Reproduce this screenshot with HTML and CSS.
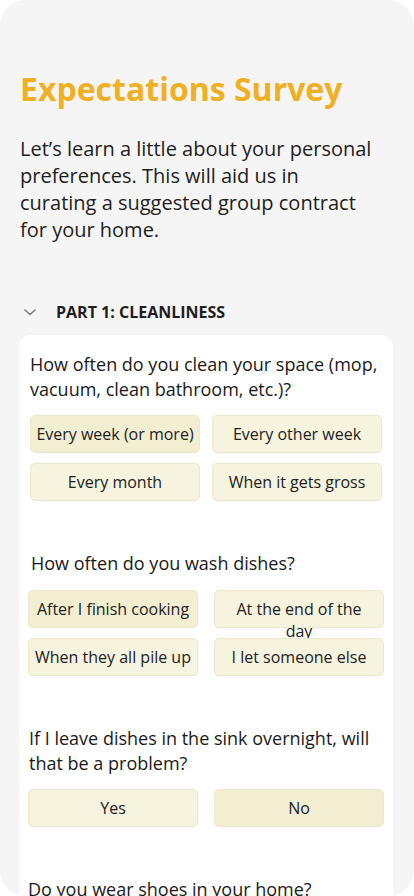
FILE: index.html
```html
<!DOCTYPE html>
<html lang="en">
<head>
<meta charset="utf-8">
<title>Expectations Survey</title>
<link rel="stylesheet" href="styles.css">
</head>
<body>
<div class="screen">
  <header class="intro">
    <h1 class="title">Expectations Survey</h1>
    <p class="lead">Let’s learn a little about your personal preferences. This will aid us in curating a suggested group contract for your home.</p>
  </header>
  <div class="section-head">
    <svg class="chev" width="12" height="7" viewBox="0 0 12 7" aria-hidden="true"><path d="M1 1l5 4.5L11 1" fill="none" stroke="#7a7a7a" stroke-width="1.5" stroke-linecap="round" stroke-linejoin="round"/></svg>
    <span class="section-title">PART 1: CLEANLINESS</span>
  </div>
  <div class="card">
    <div class="question q1">
      <p class="q-text">How often do you clean your space (mop, vacuum, clean bathroom, etc.)?</p>
      <div class="options">
        <button class="opt selected">Every week (or more)</button>
        <button class="opt">Every other week</button>
        <button class="opt">Every month</button>
        <button class="opt">When it gets gross</button>
      </div>
    </div>
    <div class="question q2">
      <p class="q-text indent">How often do you wash dishes?</p>
      <div class="options wide">
        <button class="opt selected">After I finish cooking</button>
        <button class="opt">At the end of the<br>day</button>
        <button class="opt">When they all pile up</button>
        <button class="opt">I let someone else</button>
      </div>
    </div>
    <div class="question q3">
      <p class="q-text">If I leave dishes in the sink overnight, will that be a problem?</p>
      <div class="options wide">
        <button class="opt">Yes</button>
        <button class="opt selected">No</button>
      </div>
    </div>
    <div class="question q4">
      <p class="q-text">Do you wear shoes in your home?</p>
    </div>
  </div>
</div>
</body>
</html>
```

FILE: styles.css
```css
* { box-sizing: border-box; }
html, body { margin: 0; padding: 0; background: #ffffff; }
body { font-family: "Open Sans", "Noto Sans", sans-serif; color: #1e1e1e; }

.screen {
  width: 414px;
  height: 896px;
  background: #f5f5f5;
  border-radius: 26px;
  overflow: hidden;
}

.intro { padding: 67px 38px 0 20px; }
.title {
  margin: 0;
  font-size: 32px;
  line-height: 44px;
  font-weight: 700;
  color: #f0b024;
  letter-spacing: 0;
  white-space: nowrap;
}
.lead {
  margin: 24px 0 0;
  font-size: 20px;
  line-height: 27px;
  color: #1e1e1e;
}

.section-head {
  display: flex;
  align-items: center;
  margin-top: 59px;
  padding-left: 24px;
  height: 20px;
}
.chev { display: block; margin-right: 20px; }
.section-title {
  font-size: 16px;
  line-height: 20px;
  font-weight: 700;
  color: #1e1e1e;
}

.card {
  margin: 13px 21px 0 19px;
  background: #ffffff;
  border-radius: 12px;
  padding-top: 17px;
  display: flex;
  flex-direction: column;
  gap: 50px;
  min-height: 600px;
}

.question { padding: 0 11px; }
.question.q2, .question.q3, .question.q4 { padding: 0 9px; }

.q-text {
  margin: 0;
  font-size: 18px;
  line-height: 25px;
  color: #1a1a1a;
}
.q-text.indent { padding-left: 3px; }
.q3 .q-text { padding-left: 1px; }

.options {
  display: grid;
  grid-template-columns: 1fr 1fr;
  column-gap: 12px;
  row-gap: 10px;
  margin-top: 13px;
}
.options.wide { column-gap: 16px; }
.q2 .options { margin-top: 14px; }

.opt {
  height: 38px;
  padding: 7px 2px;
  font-family: inherit;
  font-size: 16px;
  line-height: 22px;
  color: #222222;
  background: #f6f3de;
  border: 1px solid #ece8cd;
  border-radius: 5px;
  text-align: center;
  vertical-align: top;
  overflow: visible;
  white-space: nowrap;
  display: block;
}
.opt.selected { background: #f2eed2; }
```
